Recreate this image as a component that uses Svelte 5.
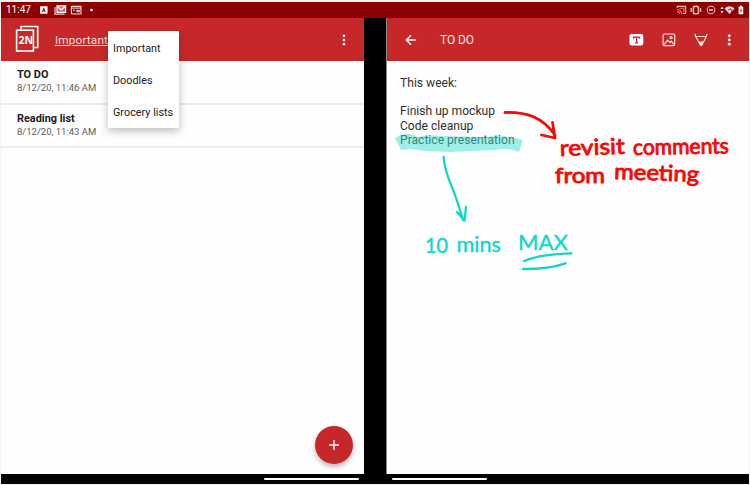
<script>
  const notes = [
    { title: 'TO DO', date: '8/12/20, 11:46 AM' },
    { title: 'Reading list', date: '8/12/20, 11:43 AM' }
  ];
  const categories = ['Important', 'Doodles', 'Grocery lists'];
</script>

<div class="device">
  <header class="status">
    <span class="clock">11:47</span>
    <svg class="notices" width="58" height="10" viewBox="0 0 58 10">
      <rect x="1" y="1.2" width="7.6" height="7.6" rx=".8" fill="#fff" />
      <path d="M3.4 7L4.8 3.2L6.2 7M3.9 5.8H5.7" fill="none" stroke="#900" />
      <path d="M16 2v7.2h9.6" fill="none" stroke="#f2c9c9" stroke-width="1.2" />
      <rect x="18" y=".8" width="8.6" height="6.6" fill="#c66" stroke="#fff" stroke-width="1.2" />
      <path d="M18.2 1.2l4.1 3.6 4.1-3.6" fill="none" stroke="#fff" stroke-width="1.3" />
      <rect x="32.4" y="1.4" width="9.6" height="7.6" rx=".6" fill="none" stroke="#f7dede" stroke-width="1.1" />
      <path d="M32.5 3.1h9.5M37.8 5.3h2.6v1.5h-2.6zM34 5.3h2" fill="none" stroke="#f7dede" />
      <circle cx="52.5" cy="5" r="1.3" fill="#fff" />
    </svg>
    <svg class="system" width="70" height="10" viewBox="0 0 70 10">
      <g fill="none" stroke="#e8b5b5" stroke-width="1.1">
        <path d="M1.2 3V1.4h8.5v7H7" />
        <path d="M1 4.2a4.6 4.6 0 0 1 4.6 4.6M1 6.4a2.4 2.4 0 0 1 2.4 2.4M3.4 3.3h4.5v3.5" stroke="#ff765f" />
        <rect x="17.4" y="1.4" width="5" height="7.4" rx="1.4" stroke-width="1.6" />
        <path d="M15.2 3v4M24.6 3v4" stroke-width="1.4" />
        <circle cx="35" cy="5" r="3.8" />
        <path d="M33 5h4" stroke="#fff" stroke-width="1.2" />
      </g>
      <path d="M44.5 4L46 1.5 47.5 4zM44.5 6L46 8.5 47.5 6z" fill="#fff" />
      <path d="M48.5 3.5Q53.5-.8 58.5 3.5L53.5 9z" fill="#f2d4d4" />
      <path d="M52 5l3-1.2 1.5 4" fill="none" stroke="#8c0000" stroke-width=".8" />
      <path d="M62.6 1.8h1.2V.8h2.2v1h1.2v7.4h-4.6z" fill="#fff" />
      <path d="M65.4 3.5l-1.2 2h1.5l-1 2" fill="none" stroke="#8c0000" stroke-width=".7" />
    </svg>
  </header>

  <main class="screens">
    <section class="screen list">
      <div class="bar">
        <svg class="logo" width="25" height="28" viewBox="0 0 25 28">
          <g fill="none" stroke="#fff" stroke-width="1.6">
            <path d="M6 5V1.5h16.7v21H19" />
            <rect x="1.6" y="5.2" width="16.8" height="20.8" />
          </g>
          <text x="3.4" y="18.9">2N</text>
        </svg>
        <span class="category">Important</span>
        <svg class="dots" width="6" height="14" viewBox="0 0 6 14" fill="#fff">
          <circle cx="3" cy="2.8" r="1.35" /><circle cx="3" cy="7" r="1.35" /><circle cx="3" cy="11.2" r="1.35" />
        </svg>
        <div class="menu">
          {#each categories as category}
            <div class="option">{category}</div>
          {/each}
        </div>
      </div>
      {#each notes as note}
        <article class="note">
          <strong>{note.title}</strong>
          <span>{note.date}</span>
        </article>
      {/each}
      <button class="fab" aria-label="New note">
        <svg width="12" height="12" viewBox="0 0 12 12"><path d="M6 1v10M1 6h10" stroke="#fff" stroke-width="1.3" /></svg>
      </button>
    </section>

    <section class="screen editor">
      <div class="bar">
        <svg class="back" width="12" height="12" viewBox="0 0 12 12">
          <path d="M11.2 6H1.6M6 1.3L1.3 6 6 10.7" fill="none" stroke="#fff" stroke-width="1.4" />
        </svg>
        <span class="heading">TO DO</span>
        <svg class="tools" width="106" height="16" viewBox="0 0 106 16">
          <rect x=".5" y="2" width="13.8" height="11.6" rx="2" fill="#fff" />
          <path d="M4.6 6.7V5.2h6v1.5M7.6 5.2v5.6M6.2 10.8h2.8" fill="none" stroke="#c6282a" stroke-width="1.3" />
          <g fill="none" stroke="#fbe4e4" stroke-width="1.2">
            <rect x="34.1" y="2" width="11.6" height="11.6" rx="1.3" />
            <path d="M35.2 12.4l3.4-4.2 2.2 2.2 1.4-1.2 2.5 3.2" />
            <circle cx="42" cy="5.6" r="1.1" />
            <path d="M66 1.8l.7 2.7h10.6l.7-2.7M66.7 4.5l4.8 9h1.2l4.6-9M69.9 10h4.4" />
          </g>
          <path d="M70.2 10.5h3.4L72.1 14z" fill="#fff" />
          <g fill="#fff"><circle cx="100.2" cy="3.8" r="1.4" /><circle cx="100.2" cy="8" r="1.4" /><circle cx="100.2" cy="12.2" r="1.4" /></g>
        </svg>
      </div>
      <div class="body">
        <p>This week:</p>
        <p>&nbsp;</p>
        <p>Finish up mockup</p>
        <p>Code cleanup</p>
        <p>Practice presentation</p>
      </div>
      <svg class="ink" width="363" height="413" viewBox="386 61 363 413">
        <path d="M395 138Q403 133 411 134L418 137Q430 134 442 136L486 137Q503 134 523 140L519 152Q507 147 496 150L450 152 426 151 410 149 401 150z" fill="#37e1cc" fill-opacity=".48" />
        <g class="red">
          <path d="M505 112.5C527 112 542 117 555 135M541.5 135L555 138 552.5 122.5" />
          <text x="560" y="156" textLength="65" lengthAdjust="spacingAndGlyphs" transform="rotate(-2 560 156)">revisit</text>
          <text x="633" y="155" textLength="96" lengthAdjust="spacingAndGlyphs" transform="rotate(-1 633 155)">comments</text>
          <text x="555" y="183" textLength="50" lengthAdjust="spacingAndGlyphs">from</text>
          <text x="614" y="179" textLength="85" lengthAdjust="spacingAndGlyphs" transform="rotate(2 614 179)">meeting</text>
        </g>
        <g class="teal">
          <path d="M443.7 157Q444 166 449.5 181 456 196 463 220M457 212L464.5 220.7 466 207" />
          <text x="425" y="253" textLength="23" lengthAdjust="spacingAndGlyphs">10</text>
          <text x="456.5" y="251.5" textLength="44.5" lengthAdjust="spacingAndGlyphs">mins</text>
          <text x="518" y="250" textLength="50" lengthAdjust="spacingAndGlyphs">MAX</text>
          <path d="M524 261Q541 254 571.5 253.3M523 269Q550 269 565.5 263.3" />
        </g>
      </svg>
    </section>
  </main>

  <footer class="nav"><i></i><i></i></footer>
</div>

<style>
  :global(body) { background: #fff; }
  .device {
    box-sizing: border-box;
    width: 750px;
    height: 485px;
    padding: 2px 1px 1px;
    display: flex;
    flex-direction: column;
    background: #f3f3f3;
    font-family: Roboto, sans-serif;
    color: #202020;
  }
  .status { height: 16px; flex: none; display: flex; align-items: center; background: #8e0000; color: #fff; }
  .clock { width: 31px; padding-left: 5px; margin-right: 1px; font-size: 10px; line-height: 12px; }
  .notices { margin-left: 1px; }
  .system { margin-left: auto; margin-right: 3px; }
  .screens { flex: 1; display: flex; justify-content: space-between; background: #000; }
  .screen { position: relative; height: 456px; background: #fefefe; }
  .list { width: 363px; }
  .editor { width: 363px; border-left: 1px solid #8a8a8a; box-sizing: border-box; }
  .bar { position: relative; height: 43px; display: flex; align-items: center; box-sizing: border-box; background: #c6282a; color: #fff; }
  .list .bar { padding: 0 17px 0 14px; }
  .logo { margin-top: -1px; }
  .logo text { font: 700 10.5px "Open Sans", sans-serif; fill: #fff; }
  .category { margin-left: 15px; font-size: 11.8px; letter-spacing: .13px; color: #f7dede; text-decoration: underline; text-decoration-thickness: 1px; text-underline-offset: 1px; }
  .dots { margin-left: auto; }
  .menu {
    position: absolute;
    left: 107px;
    top: 13px;
    width: 71px;
    height: 97px;
    padding-top: 1px;
    box-sizing: border-box;
    background: #fff;
    color: #202020;
    border-radius: 1px;
    box-shadow: 0 3px 8px #0004;
    z-index: 2;
  }
  .option { height: 32.2px; padding: 1px 0 0 5px; box-sizing: border-box; display: flex; align-items: center; font-size: 10.8px; letter-spacing: .02px; white-space: nowrap; }
  .note { height: 43.5px; padding: 7px 16px 0; box-sizing: border-box; display: flex; flex-direction: column; border-bottom: 2px solid #ececec; }
  .note strong { font-size: 10.9px; line-height: 13px; }
  .note span { font-size: 9.5px; line-height: 13px; color: #606060; }
  .fab {
    position: absolute;
    left: 314px;
    top: 408px;
    width: 38px;
    height: 38px;
    padding: 0;
    border: 0;
    border-radius: 50%;
    background: #c6282a;
    display: grid;
    place-items: center;
    box-shadow: 0 3px 5px #0004;
  }
  .back { margin-left: 18px; }
  .heading { margin-left: 23px; font-size: 12px; letter-spacing: -.1px; color: #fbeaea; }
  .tools { margin-left: auto; margin-right: 14px; }
  .body { padding: 15px 13px; font-size: 12.1px; line-height: 14.2px; color: #303030; }
  .body p { margin: 0; }
  .ink { position: absolute; left: -1px; top: 43px; }
  .ink g path { fill: none; stroke-linecap: round; stroke-linejoin: round; }
  .ink text { font: 400 22px Lato, sans-serif; stroke-width: .6; stroke-linejoin: round; }
  .red path { stroke: #f90606; stroke-width: 2.8; }
  .red text { fill: #f90606; stroke: #f90606; stroke-width: .9; }
  .teal path { stroke: #10d8c5; stroke-width: 2.3; }
  .teal text { fill: #10d8c5; stroke: #10d8c5; stroke-width: .4; }
  .nav { height: 10px; flex: none; display: flex; align-items: center; gap: 33px; padding-left: 263px; background: #000; }
  .nav i { width: 95px; height: 2.4px; border-radius: 2px; background: #fff; }
</style>
